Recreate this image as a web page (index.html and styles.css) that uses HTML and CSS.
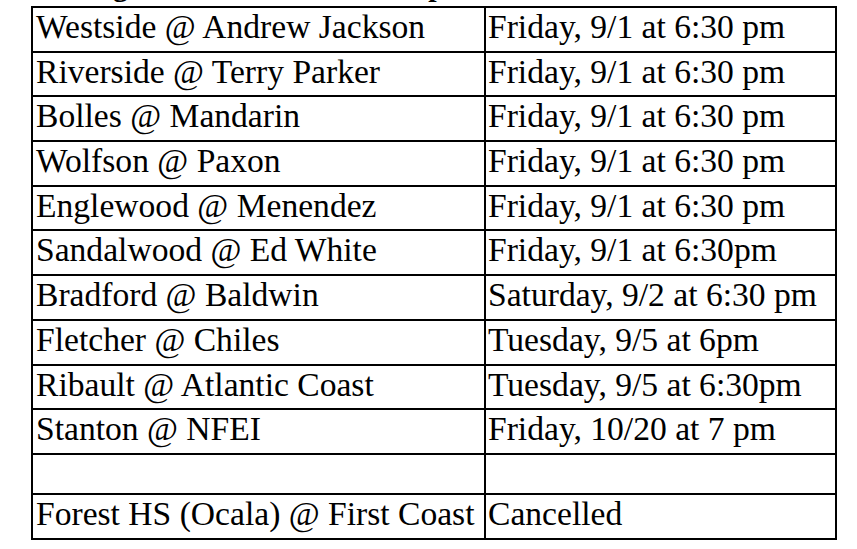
FILE: index.html
```html
<!DOCTYPE html>
<html lang="en">
<head>
<meta charset="utf-8">
<title>Regular Season Schedule Updates</title>
<link rel="stylesheet" href="styles.css">
</head>
<body>
<h1 class="title">Regular Season Schedule Updates</h1>
<table class="schedule">
  <colgroup><col class="col-game"><col class="col-time"></colgroup>
  <tbody>
    <tr class="row"><td>Westside @ Andrew Jackson</td><td>Friday, 9/1 at 6:30 pm</td></tr>
    <tr class="row"><td>Riverside @ Terry Parker</td><td>Friday, 9/1 at 6:30 pm</td></tr>
    <tr class="row"><td>Bolles @ Mandarin</td><td>Friday, 9/1 at 6:30 pm</td></tr>
    <tr class="row"><td>Wolfson @ Paxon</td><td>Friday, 9/1 at 6:30 pm</td></tr>
    <tr class="row"><td>Englewood @ Menendez</td><td>Friday, 9/1 at 6:30 pm</td></tr>
    <tr class="row"><td>Sandalwood @ Ed White</td><td>Friday, 9/1 at 6:30pm</td></tr>
    <tr class="row"><td>Bradford @ Baldwin</td><td>Saturday, 9/2 at 6:30 pm</td></tr>
    <tr class="row"><td>Fletcher @ Chiles</td><td>Tuesday, 9/5 at 6pm</td></tr>
    <tr class="row"><td>Ribault @ Atlantic Coast</td><td>Tuesday, 9/5 at 6:30pm</td></tr>
    <tr class="row"><td>Stanton @ NFEI</td><td>Friday, 10/20 at 7 pm</td></tr>
    <tr class="row row-empty"><td></td><td></td></tr>
    <tr class="row row-last"><td>Forest HS (Ocala) @ First Coast</td><td>Cancelled</td></tr>
  </tbody>
</table>
</body>
</html>
```

FILE: styles.css
```css
html, body {
  margin: 0;
  padding: 0;
  background: #fff;
}

body {
  width: 857px;
  height: 549px;
  overflow: hidden;
  font-family: "Liberation Serif", "Times New Roman", serif;
  color: #000;
}

.title {
  margin: -29px 0 0;
  padding-left: 78px;
  height: 30px;
  font-size: 30px;
  line-height: 30px;
  font-weight: bold;
  white-space: nowrap;
}

.schedule {
  margin: 5px 0 0 31px;
  width: 806px;
  table-layout: fixed;
  border-collapse: collapse;
  border: 2px solid #000;
}

.col-game {
  width: 453px;
}

.schedule td {
  border: 2px solid #000;
  padding: 0 3px;
  font-size: 33.6px;
  line-height: 38px;
  vertical-align: top;
  white-space: nowrap;
}

.schedule td + td {
  padding-left: 2px;
}

.row {
  height: 44.7px;
}

.row-empty {
  height: 40px;
}

.row-last {
  height: 45px;
}
```
